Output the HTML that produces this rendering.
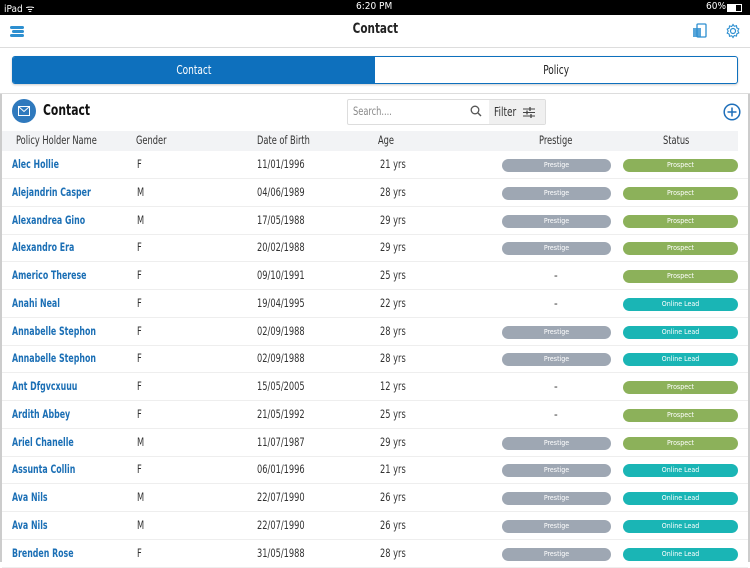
<!DOCTYPE html>
<html><head><meta charset="utf-8"><style>
*{margin:0;padding:0;box-sizing:border-box}
body{width:750px;height:562px;overflow:hidden;background:#fff;font-family:"DejaVu Sans Condensed","Liberation Sans Narrow","Liberation Sans",sans-serif;color:#333;position:relative}
.abs{position:absolute}
.n{display:inline-block;transform:scaleX(.8);transform-origin:left center;white-space:nowrap}
.nc{display:inline-block;transform:scaleX(.8);transform-origin:center;white-space:nowrap}
.sb{left:0;top:0;width:750px;height:15px;background:#000;color:#fff;font-size:10px}
.nav{top:15px;left:0;width:750px;height:33px;border-bottom:1px solid #ddd}
.seg{top:56px;left:12px;width:726px;height:28px;border:1px solid #0e70bd;border-radius:3px;overflow:hidden;display:flex;box-shadow:0 1px 2px rgba(0,0,0,.2)}
.seg div{flex:1;text-align:center;line-height:26px;font-size:12.5px}
.row{left:2px;width:746px;height:28px;border-bottom:1px solid #eee;font-size:11.5px}
.row span{position:absolute;top:0;line-height:27px}
.nm{left:10px;color:#1b6fb5;font-weight:bold;transform:scaleX(.76)!important}
.pill{position:absolute;top:8px;height:13px;border-radius:7px;color:#fff;font-size:7px;text-align:center;line-height:13px}
.pr{left:500px;width:109px;background:#9ea7b3}
.st{left:621px;width:115px}
.p{background:#8cb15a}.o{background:#1ab5b5}
.dash{left:552px}
</style></head><body>
<div class="abs sb"><span class="abs" style="left:4px;top:1px">iPad ᯤ</span><span class="abs" style="left:356px;top:1px">6:20 PM</span><span class="abs" style="left:706px;top:1px">60%</span><div class="abs" style="left:727px;top:4px;width:15px;height:8px;border:1px solid #fff"><div style="width:8px;height:6px;background:#fff"></div></div></div>
<div class="abs nav">
<div class="abs" style="left:10px;top:11px;width:14px;height:3px;background:#2d8fd0;border-radius:2px"></div>
<div class="abs" style="left:12px;top:15px;width:12px;height:3px;background:#2d8fd0;border-radius:2px"></div>
<div class="abs" style="left:10px;top:19px;width:14px;height:3px;background:#2d8fd0;border-radius:2px"></div>
<div class="abs" style="left:0;width:750px;top:6px;text-align:center;font-size:14.5px;font-weight:bold;color:#222"><span class="nc">Contact</span></div>
<svg class="abs" style="left:692px;top:8px" width="16" height="16" viewBox="0 0 16 16"><rect x="5" y="1" width="9" height="13" rx="1" fill="none" stroke="#2d8fd0" stroke-width="1.3"/><rect x="1" y="5" width="8" height="9" fill="#2d8fd0" opacity=".8"/></svg>
<svg class="abs" style="left:725px;top:8px" width="16" height="16" viewBox="0 0 16 16"><circle cx="8" cy="8" r="2.5" fill="none" stroke="#2d8fd0" stroke-width="1.2"/><path d="M8 1.5l1.3 1.8 2.2-.6.3 2.2 2 1-1 2 1 2-2 1-.3 2.2-2.2-.6L8 14.5l-1.3-1.8-2.2.6-.3-2.2-2-1 1-2-1-2 2-1 .3-2.2 2.2.6z" fill="none" stroke="#2d8fd0" stroke-width="1.1"/></svg>
</div>
<div class="abs seg"><div style="background:#0e70bd;color:#fff"><span class="nc">Contact</span></div><div style="color:#222"><span class="nc">Policy</span></div></div>
<div class="abs" style="left:0;top:93px;width:750px;height:1px;background:#ddd"></div>
<div class="abs" style="left:0;top:94px;width:2px;height:468px;background:#ccc"></div>
<div class="abs" style="left:748px;top:94px;width:2px;height:468px;background:#ccc"></div>
<div class="abs" style="left:12px;top:99px;width:24px;height:24px;border-radius:50%;background:#2f79bd"></div>
<svg class="abs" style="left:18px;top:106px" width="12" height="10" viewBox="0 0 12 10"><rect x=".5" y=".5" width="11" height="9" fill="none" stroke="#fff"/><path d="M.5 .5L6 5.5 11.5 .5" fill="none" stroke="#fff"/></svg>
<div class="abs" style="left:43px;top:101px;font-size:15px;font-weight:bold;color:#111"><span class="n">Contact</span></div>
<div class="abs" style="left:347px;top:99px;width:199px;height:26px;border:1px solid #ddd;border-radius:2px"></div>
<div class="abs" style="left:353px;top:104px;font-size:11.5px;color:#888"><span class="n">Search....</span></div>
<svg class="abs" style="left:470px;top:105px" width="12" height="12" viewBox="0 0 12 12"><circle cx="5" cy="5" r="3.8" fill="none" stroke="#555" stroke-width="1.3"/><path d="M8 8l3 3" stroke="#555" stroke-width="1.4"/></svg>
<div class="abs" style="left:489px;top:100px;width:56px;height:24px;background:#f0f0f0"></div>
<div class="abs" style="left:494px;top:104px;font-size:12.5px;color:#333"><span class="n">Filter</span></div>
<svg class="abs" style="left:523px;top:107px" width="12" height="11" viewBox="0 0 12 11"><path d="M0 2h12M0 5.5h12M0 9h12" stroke="#444"/><path d="M7 0v4M4 3.5v4M8 7v4" stroke="#444" stroke-width="1.3"/></svg>
<svg class="abs" style="left:723px;top:103px" width="18" height="18" viewBox="0 0 18 18"><circle cx="9" cy="9" r="7.8" fill="none" stroke="#1e6fba" stroke-width="1.5"/><path d="M9 4.5v9M4.5 9h9" stroke="#1e6fba" stroke-width="1.5"/></svg>
<div class="abs" style="left:2px;top:131px;width:736px;height:20px;background:#f2f3f5;font-size:11.5px;color:#333">
<span class="abs n" style="left:14px;top:2px">Policy Holder Name</span><span class="abs n" style="left:134px;top:2px">Gender</span><span class="abs n" style="left:255px;top:2px">Date of Birth</span><span class="abs n" style="left:376px;top:2px">Age</span><span class="abs n" style="left:537px;top:2px">Prestige</span><span class="abs n" style="left:661px;top:2px">Status</span></div>
<div id="rows"></div>
<script>
var d=[["Alec Hollie","F","11/01/1996","21",1,1],["Alejandrin Casper","M","04/06/1989","28",1,1],["Alexandrea Gino","M","17/05/1988","29",1,1],["Alexandro Era","F","20/02/1988","29",1,1],["Americo Therese","F","09/10/1991","25",0,1],["Anahi Neal","F","19/04/1995","22",0,0],["Annabelle Stephon","F","02/09/1988","28",1,0],["Annabelle Stephon","F","02/09/1988","28",1,0],["Ant Dfgvcxuuu","F","15/05/2005","12",0,1],["Ardith Abbey","F","21/05/1992","25",0,1],["Ariel Chanelle","M","11/07/1987","29",1,1],["Assunta Collin","F","06/01/1996","21",1,0],["Ava Nils","M","22/07/1990","26",1,0],["Ava Nils","M","22/07/1990","26",1,0],["Brenden Rose","F","31/05/1988","28",1,0]];
var h="";d.forEach(function(r,i){var t=151+i*27.75;h+='<div class="abs row" style="top:'+t+'px"><span class="nm n">'+r[0]+'</span><span class="n" style="left:135px">'+r[1]+'</span><span class="n" style="left:255px">'+r[2]+'</span><span class="n" style="left:378px">'+r[3]+' yrs</span>'+(r[4]?'<div class="pill pr">Prestige</div>':'<span class="dash">-</span>')+'<div class="pill st '+(r[5]?'p">Prospect':'o">Online Lead')+'</div></div>'});
document.getElementById("rows").innerHTML=h;
</script>
</body></html>
